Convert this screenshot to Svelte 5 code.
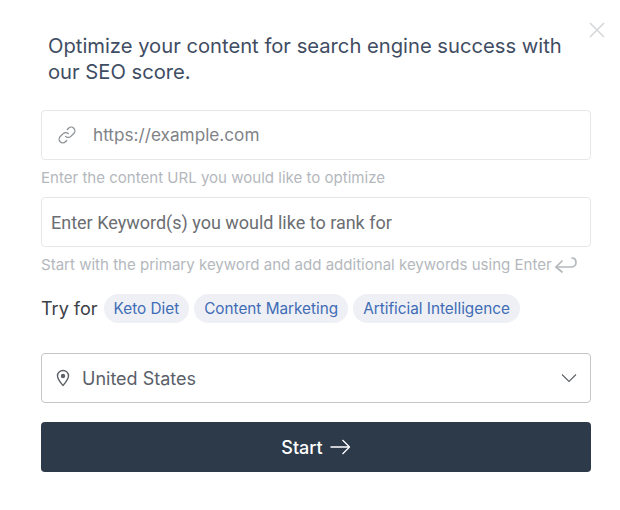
<script>
  let url = $state("");
  let keywords = $state("");
  const suggestions = ["Keto Diet", "Content Marketing", "Artificial Intelligence"];
</script>

<main class="modal">
  <button class="close" aria-label="Close">
    <svg width="16" height="16" viewBox="0 0 16 16" fill="none" stroke="#d4d6d9" stroke-width="1.5">
      <path d="M1 1l14 14M15 1L1 15" />
    </svg>
  </button>

  <h1>Optimize your content for search engine success with our SEO score.</h1>

  <div class="field url">
    <svg width="22" height="22" viewBox="0 0 24 24" fill="none" stroke="#8b8f94" stroke-width="1.4" stroke-linecap="round" stroke-linejoin="round">
      <path d="M10.5 13.5a4 4 0 0 0 5.7 0l3.2-3.2a4 4 0 0 0-5.7-5.7l-1.4 1.4" />
      <path d="M13.5 10.5a4 4 0 0 0-5.7 0l-3.2 3.2a4 4 0 0 0 5.7 5.7l1.4-1.4" />
    </svg>
    <input bind:value={url} placeholder="https://example.com" />
  </div>
  <p class="hint first">Enter the content URL you would like to optimize</p>

  <div class="field keyword">
    <input bind:value={keywords} placeholder="Enter Keyword(s) you would like to rank for" />
  </div>
  <p class="hint second">
    Start with the primary keyword and add additional keywords using Enter
    <svg width="24" height="18" viewBox="0 0 24 18" fill="none" stroke="#b4b8bd" stroke-width="1.7" stroke-linecap="round" stroke-linejoin="round">
      <path d="M8 5L2 11l6 5" />
      <path d="M2 11h15c3 0 5-2 5-4.500S20.500 2 18 2" />
    </svg>
  </p>

  <div class="try">
    <span class="try-label">Try for</span>
    {#each suggestions as item}
      <button class="chip">{item}</button>
    {/each}
  </div>

  <div class="field select">
    <svg width="16" height="18" viewBox="0 0 16 18" fill="none" stroke="#5c6268" stroke-width="1.4">
      <path d="M8 16.500c-3-3.500-5.500-6.300-5.500-9.500a5.500 5.500 0 0 1 11 0c0 3.200-2.500 6-5.500 9.500z" stroke-linejoin="round" />
      <circle cx="8" cy="7" r="2.200" fill="#5c6268" stroke="none" />
    </svg>
    <span class="country">United States</span>
    <svg class="chevron" width="16" height="10" viewBox="0 0 16 10" fill="none" stroke="#5c6268" stroke-width="1.1">
      <path d="M1 1.500l7 7 7-7" />
    </svg>
  </div>

  <button class="start">
    Start
    <svg width="21" height="16" viewBox="0 0 21 16" fill="none" stroke="#fff" stroke-width="1.3" stroke-linejoin="round">
      <path d="M0.500 8h19M12.500 1l7 7-7 7" />
    </svg>
  </button>
</main>

<style>
  :global(body) {
    background: #fff;
  }

  .modal {
    position: relative;
    box-sizing: border-box;
    width: 620px;
    height: 510px;
    padding: 33px 29px 0 41px;
    font-family: Inter, "Liberation Sans", sans-serif;
  }

  .close {
    position: absolute;
    top: 22px;
    right: 15px;
    padding: 0;
    border: 0;
    background: none;
    line-height: 0;
  }

  h1 {
    margin: 0 0 25px;
    padding-left: 7px;
    font-size: 20.200px;
    font-weight: 400;
    line-height: 26px;
    color: #3f4d63;
  }

  .field {
    box-sizing: border-box;
    display: flex;
    align-items: center;
    height: 50px;
    background: #fff;
    border: 1px solid #e6e7e9;
    border-radius: 4px;
  }

  input {
    flex: 1;
    min-width: 0;
    padding: 0;
    border: 0;
    outline: 0;
    background: none;
  }

  .url {
    padding-left: 14px;
  }

  .url input {
    margin-left: 15px;
    padding-bottom: 2px;
    font-family: Inter, sans-serif;
    font-size: 17.200px;
  }

  .url input::placeholder {
    color: #7f8388;
    opacity: 1;
  }

  .keyword {
    padding-left: 9px;
  }

  .keyword input {
    font-family: Roboto, sans-serif;
    font-size: 18px;
  }

  .keyword input::placeholder {
    color: #6b6e72;
    opacity: 1;
  }

  .hint {
    display: flex;
    align-items: center;
    margin: 0;
    font-size: 15.050px;
    line-height: 18px;
    color: #b4b8bd;
    white-space: nowrap;
  }

  .hint svg {
    margin-left: 2px;
  }

  .hint.first {
    margin: 9px 0 10px;
  }

  .hint.second {
    margin: 9px 0 0;
  }

  .try {
    display: flex;
    align-items: center;
    gap: 5px;
    margin-top: 20px;
  }

  .try-label {
    margin-right: 1px;
    font-size: 18px;
    color: #3b4046;
  }

  .chip {
    height: 29px;
    padding: 0 10px;
    border: 0;
    border-radius: 15px;
    background: #eef0f5;
    font-family: Inter, sans-serif;
    font-size: 15.300px;
    color: #3f6cb5;
  }

  .select {
    margin-top: 30px;
    padding: 0 13px 0 13px;
    border-color: #c4c6c8;
  }

  .country {
    flex: 1;
    margin-left: 11px;
    font-size: 18px;
    color: #5a6068;
  }

  .start {
    display: flex;
    align-items: center;
    justify-content: center;
    gap: 7px;
    width: 100%;
    height: 50px;
    margin-top: 19px;
    border: 0;
    border-radius: 4px;
    background: #2d3a4a;
    font-family: Inter, sans-serif;
    font-size: 18px;
    font-weight: 500;
    color: #fff;
  }
</style>
